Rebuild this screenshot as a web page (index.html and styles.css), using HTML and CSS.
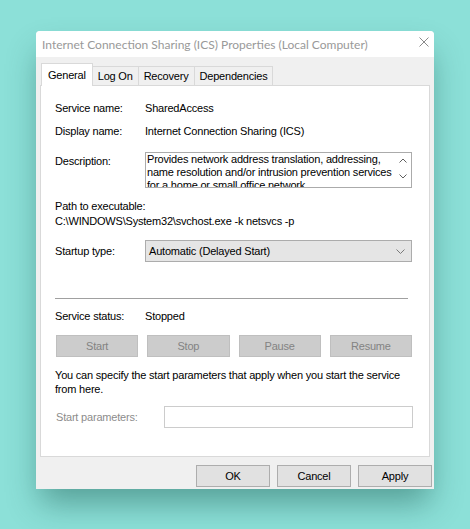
FILE: index.html
```html
<!DOCTYPE html>
<html lang="en">
<head>
<meta charset="utf-8">
<title>Internet Connection Sharing (ICS) Properties</title>
<link rel="stylesheet" href="styles.css">
</head>
<body>
  <div class="window">
    <div class="titlebar">
      <span class="title">Internet Connection Sharing (ICS) Properties (Local Computer)</span>
      <svg class="close" width="10" height="10" viewBox="0 0 10 10" aria-label="Close">
        <path d="M0.5 0.5 L9.5 9.5 M9.5 0.5 L0.5 9.5" stroke="#8a8a8a" stroke-width="1" fill="none"/>
      </svg>
    </div>

    <div class="tabs">
      <div class="tab active">General</div>
      <div class="tab">Log On</div>
      <div class="tab">Recovery</div>
      <div class="tab">Dependencies</div>
    </div>

    <div class="panel">
      <div class="field first">
        <span class="label">Service name:</span>
        <span class="value">SharedAccess</span>
      </div>
      <div class="field second">
        <span class="label">Display name:</span>
        <span class="value">Internet Connection Sharing (ICS)</span>
      </div>
      <div class="field desc-row">
        <span class="label desc-label">Description:</span>
        <div class="desc-box">
          <div class="desc-text">Provides network address translation, addressing,<br>name resolution and/or intrusion prevention services<br>for a home or small office network.</div>
          <div class="scroll">
            <svg width="8" height="5" viewBox="0 0 8 5"><path d="M0.5 4.5 L4 1 L7.5 4.5" stroke="#606060" fill="none"/></svg>
            <svg width="8" height="5" viewBox="0 0 8 5"><path d="M0.5 0.5 L4 4 L7.5 0.5" stroke="#606060" fill="none"/></svg>
          </div>
        </div>
      </div>
      <div class="path-label">Path to executable:</div>
      <div class="path-value">C:\WINDOWS\System32\svchost.exe -k netsvcs -p</div>
      <div class="field startup">
        <span class="label">Startup type:</span>
        <div class="combo">
          <span>Automatic (Delayed Start)</span>
          <svg width="9" height="5" viewBox="0 0 9 5"><path d="M0.5 0.5 L4.5 4.5 L8.5 0.5" stroke="#7a7a7a" fill="none"/></svg>
        </div>
      </div>
      <div class="separator"></div>
      <div class="field status">
        <span class="label">Service status:</span>
        <span class="value">Stopped</span>
      </div>
      <div class="controls">
        <button class="btn disabled">Start</button>
        <button class="btn disabled">Stop</button>
        <button class="btn disabled">Pause</button>
        <button class="btn disabled">Resume</button>
      </div>
      <p class="hint">You can specify the start parameters that apply when you start the service<br>from here.</p>
      <div class="params">
        <span class="params-label">Start parameters:</span>
        <div class="params-input"></div>
      </div>
    </div>

    <div class="footer">
      <button class="btn action">OK</button>
      <button class="btn action">Cancel</button>
      <button class="btn action">Apply</button>
    </div>
  </div>
</body>
</html>
```

FILE: styles.css
```css
html, body {
  margin: 0;
  padding: 0;
}

body {
  width: 470px;
  height: 529px;
  background: #8ce0d8;
  font-family: "Liberation Sans", Arial, sans-serif;
  font-size: 11px;
  letter-spacing: -0.2px;
  color: #000;
  padding: 31px 0 0 36px;
  box-sizing: border-box;
  overflow: hidden;
}

.window {
  width: 398px;
  height: 458px;
  background: #f0f0f0;
  border-radius: 4px 4px 0 0;
  box-shadow: 0 18px 30px -4px rgba(20, 80, 72, 0.45);
  display: flex;
  flex-direction: column;
}

/* caption bar */
.titlebar {
  height: 26px;
  flex: none;
  background: #fff;
  border-radius: 4px 4px 0 0;
  display: flex;
  align-items: center;
  justify-content: space-between;
  padding: 0 5px 0 6px;
}

.title {
  font-family: "Lato", "Liberation Sans", sans-serif;
  font-size: 12px;
  letter-spacing: 0;
  color: #999;
  white-space: nowrap;
}

.close {
  align-self: flex-start;
  margin-top: 6px;
}

/* tab strip */
.tabs {
  display: flex;
  align-items: flex-end;
  height: 20px;
  margin: 8px 0 0 5px;
  position: relative;
  z-index: 1;
}

.tab {
  height: 18px;
  padding: 0 5px;
  border: 1px solid #d9d9d9;
  border-bottom: none;
  margin-left: -1px;
  background: #f0f0f0;
  display: flex;
  align-items: center;
  white-space: nowrap;
}

.tab.active {
  height: 21px;
  margin-left: 0;
  margin-bottom: -1px;
  padding: 0 6px 1px;
  background: #fff;
}

/* page */
.panel {
  margin: 0 4px;
  height: 372px;
  box-sizing: border-box;
  background: #fff;
  border: 1px solid #d9d9d9;
  padding: 16px 0 0 14px;
  line-height: 13px;
}

.field {
  display: flex;
}

.label {
  width: 90px;
  flex: none;
}

.second {
  margin-top: 10px;
}

.desc-row {
  margin-top: 14px;
  align-items: flex-start;
}

.desc-label {
  padding-top: 3px;
}

.desc-box {
  width: 267px;
  height: 36px;
  box-sizing: border-box;
  border: 1px solid #ababab;
  display: flex;
  overflow: hidden;
}

.desc-text {
  flex: 1;
  padding-left: 1px;
  white-space: nowrap;
  overflow: hidden;
}

.scroll {
  width: 17px;
  flex: none;
  display: flex;
  flex-direction: column;
  align-items: center;
  gap: 11px;
  padding-top: 5px;
}

.scroll svg {
  display: block;
}

.path-label {
  margin-top: 12px;
}

.path-value {
  margin-top: 2px;
}

.startup {
  margin-top: 12px;
  align-items: center;
}

.combo {
  width: 267px;
  height: 22px;
  box-sizing: border-box;
  border: 1px solid #acacac;
  background: #e5e5e5;
  display: flex;
  align-items: center;
  justify-content: space-between;
  padding: 0 6px 0 3px;
}

.combo svg {
  display: block;
}

.separator {
  margin-top: 36px;
  width: 353px;
  height: 1px;
  background: #a0a0a0;
}

.status {
  margin-top: 11px;
}

.controls {
  margin-top: 12px;
  width: 356px;
  display: grid;
  grid-template-columns: repeat(4, 1fr);
  column-gap: 9px;
  margin-left: 1px;
}

.btn {
  font-family: inherit;
  font-size: 11px;
  letter-spacing: -0.2px;
  height: 22px;
  margin: 0;
  padding: 0;
  box-sizing: border-box;
  border: 1px solid #adadad;
  background: #e1e1e1;
  color: #000;
}

.btn.disabled {
  background: #cccccc;
  border-color: #bfbfbf;
  color: #838383;
}

.hint {
  margin: 11px 0 0;
  line-height: 14px;
}

.params {
  margin-top: 10px;
  display: flex;
  align-items: center;
}

.params-label {
  width: 108px;
  flex: none;
  color: #8c8c8c;
  padding-left: 1px;
}

.params-input {
  width: 249px;
  height: 22px;
  box-sizing: border-box;
  border: 1px solid #cccccc;
  background: #fff;
}

/* dialog buttons */
.footer {
  margin-top: 8px;
  display: flex;
  justify-content: flex-end;
  gap: 7px;
  padding-right: 2px;
}

.btn.action {
  width: 74px;
}
```
